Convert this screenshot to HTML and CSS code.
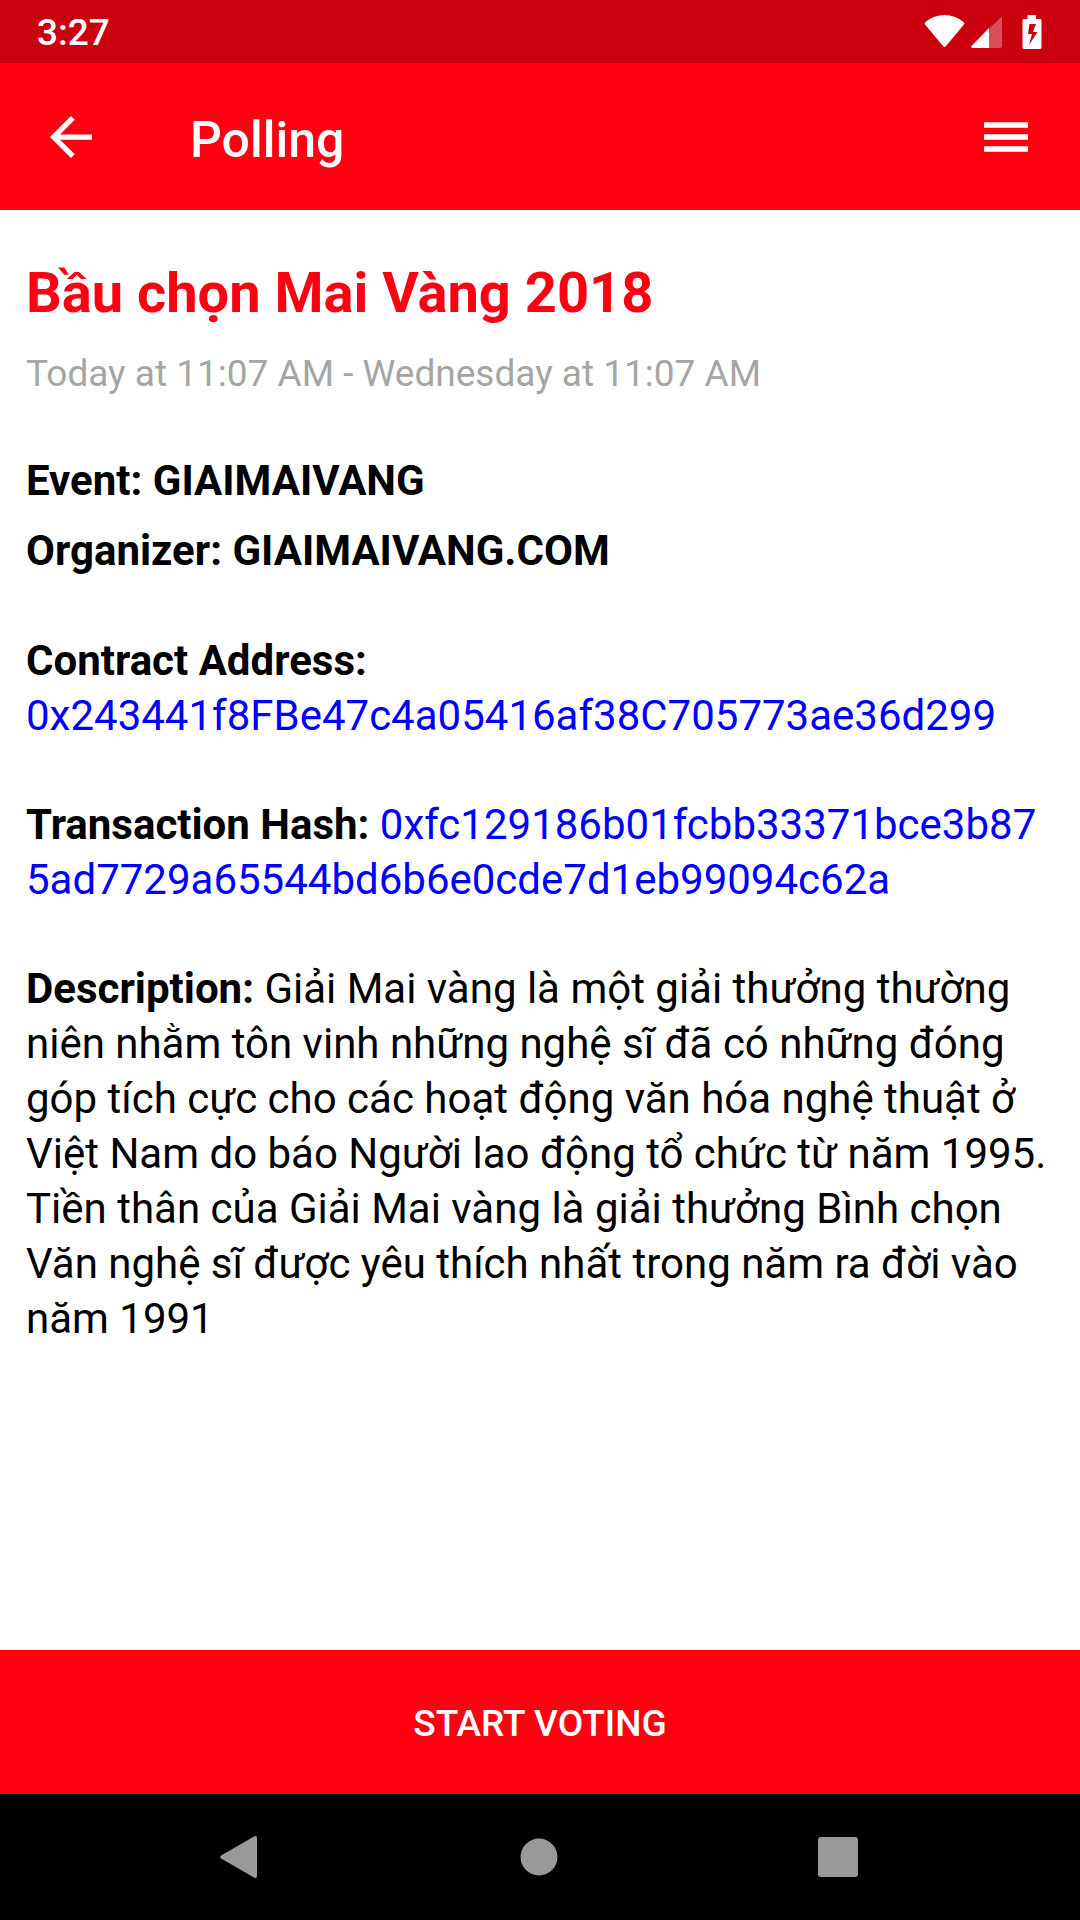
FILE: index.html
```html
<!DOCTYPE html>
<html lang="vi">
<head>
<meta charset="utf-8">
<meta name="viewport" content="width=device-width, initial-scale=1">
<title>Polling</title>
<link rel="stylesheet" href="styles.css">
</head>
<body>
<div class="status">
  <span class="clock">3:27</span>
  <div class="status-icons">
    <svg width="41" height="34" viewBox="0 0 41 34"><path fill="#fff" d="M22 31Q20.500 33 19 31L1 9.500Q0 8 1.500 7Q10 0 20.500 0T39.500 7Q41 8 40 9.500Z"/></svg>
    <svg width="32" height="34" viewBox="0 0 32 34"><path fill="#fff" opacity=".3" d="M18 14 29.500 2.500Q31 1.500 31 3V31Q31 33 29 33H18Z"/><path fill="#fff" d="M18 13V33H2Q-.5 33 .5 31Z"/></svg>
    <svg class="battery" width="20" height="34" viewBox="0 0 20 34"><path fill="#fff" fill-rule="evenodd" d="M5.500 0h8.500v4h4q1.500 0 1.500 1.500v26.500q0 2-1.500 2H2q-1.500 0-1.500-2V5.500Q.5 4 2 4h3.500ZM7.500 9 6 19h4L7 30 15.500 17H11l3-8Z"/></svg>
  </div>
</div>
<header class="appbar">
  <button class="icon-button" aria-label="Back"><svg width="42" height="42" viewBox="4 4 16 16"><path fill="#fff" d="M20 11H7.830l5.590-5.590L12 4l-8 8 8 8 1.410-1.410L7.830 13H20z"/></svg></button>
  <h1 class="screen-title">Polling</h1>
  <button class="icon-button" aria-label="Menu"><svg width="44" height="30" viewBox="0 0 44 30"><path fill="#fff" d="M0 .3h44v5.500H0zM0 12.300h44v5.500H0zM0 24.300h44v5.500H0z"/></svg></button>
</header>
<main class="content">
  <h2 class="poll-title">Bầu chọn Mai Vàng 2018</h2>
  <p class="period">Today at 11:07 AM - Wednesday at 11:07 AM</p>
  <div class="facts">
    <p>Event: GIAIMAIVANG</p>
    <p>Organizer: GIAIMAIVANG.COM</p>
  </div>
  <div class="details">
    <p><b>Contract Address:</b> <a href="#contract">0x243441f8FBe47c4a05416af38C705773ae36d299</a></p>
    <p><b>Transaction Hash:</b> <a class="hash" href="#transaction">0xfc129186b01fcbb33371bce3b875ad7729a65544bd6b6e0cde7d1eb99094c62a</a></p>
    <p><b>Description:</b> Giải Mai vàng là một giải thưởng thường niên nhằm tôn vinh những nghệ sĩ đã có những đóng góp tích cực cho các hoạt động văn hóa nghệ thuật ở Việt Nam do báo Người lao động tổ chức từ năm 1995. Tiền thân của Giải Mai vàng là giải thưởng Bình chọn Văn nghệ sĩ được yêu thích nhất trong năm ra đời vào năm 1991</p>
  </div>
</main>
<button class="vote">START VOTING</button>
<nav class="system-nav" aria-label="System">
  <button class="icon-button" aria-label="System back"><svg width="40" height="44" viewBox="0 0 40 44"><path fill="#999" d="M34 1.500Q37 0 37 3V41Q37 44 34 42.500L1 23.500Q-.5 22 1 20.500Z"/></svg></button>
  <button class="icon-button" aria-label="Home"><svg width="40" height="40" viewBox="0 0 40 40"><circle fill="#999" cx="20" cy="20" r="18.500"/></svg></button>
  <button class="icon-button" aria-label="Recent apps"><svg width="40" height="40" viewBox="0 0 40 40"><rect fill="#999" width="40" height="40" rx="3"/></svg></button>
</nav>
</body>
</html>
```

FILE: styles.css
```css
* { box-sizing: border-box; margin: 0; }
body {
  min-height: 100vh;
  display: flex;
  flex-direction: column;
  background: #fff;
  color: #000;
  font-family: Roboto, sans-serif;
}
svg { display: block; }
button { border: 0; font: inherit; color: inherit; }
.status {
  height: 63px;
  padding: 0 38px 0 37px;
  display: flex;
  align-items: center;
  justify-content: space-between;
  background: #cb000f;
  color: #fff;
}
.clock { padding-top: 3px; font-size: 37px; font-weight: 500; line-height: 60px; }
.status-icons { display: flex; align-items: center; gap: 6px; }
.battery { margin-left: 13px; }
.appbar {
  height: 147px;
  padding: 0 52px 0 50px;
  display: flex;
  align-items: center;
  background: #ff0013;
  color: #fff;
}
.icon-button { padding: 0; background: none; }
.screen-title { flex: 1; padding: 6px 0 0 98px; font-size: 50px; font-weight: 500; line-height: 60px; }
.content { flex: 1; padding: 47px 26px; }
.poll-title { color: #ff0013; font-size: 56px; line-height: 72px; }
.period { margin-top: 21px; color: #a5a5a5; font-size: 37px; line-height: 48px; }
.facts { margin-top: 48px; font-size: 42px; font-weight: 700; line-height: 70px; }
.details {
  margin-top: 47px;
  display: flex;
  flex-direction: column;
  gap: 54px;
  font-size: 42px;
  line-height: 55px;
}
.details a { color: #00f; text-decoration: none; }
.hash { word-break: break-all; }
.vote {
  height: 144px;
  padding: 3px 0 0;
  background: #ff0013;
  color: #fff;
  font-size: 37px;
  font-weight: 500;
}
.system-nav {
  height: 126px;
  padding: 0 222px 0 220px;
  display: flex;
  align-items: center;
  justify-content: space-between;
  background: #000;
}
```
